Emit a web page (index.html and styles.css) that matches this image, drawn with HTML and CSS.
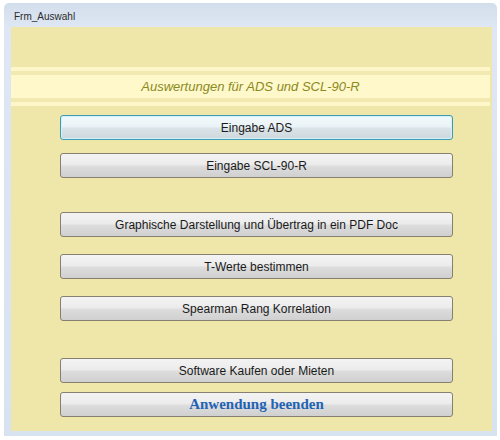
FILE: index.html
```html
<!DOCTYPE html>
<html lang="de">
<head>
<meta charset="UTF-8">
<meta name="viewport" content="width=device-width, initial-scale=1.0">
<title>Frm_Auswahl</title>
<link rel="stylesheet" href="styles.css">
</head>
<body>

<div class="window">
  <div class="titlebar">Frm_Auswahl</div>
  <div class="client">
    <div class="header">
      <div class="header-text">Auswertungen für ADS und SCL-90-R</div>
    </div>

    <div class="buttons">
      <button class="btn focused gap-xs">Eingabe ADS</button>
      <button class="btn gap-sm">Eingabe SCL-90-R</button>
      <button class="btn gap-lg">Graphische Darstellung und Übertrag in ein PDF Doc</button>
      <button class="btn gap-md">T-Werte bestimmen</button>
      <button class="btn gap-md">Spearman Rang Korrelation</button>
      <button class="btn gap-xl">Software Kaufen oder Mieten</button>
      <button class="btn quit gap-xs">Anwendung beenden</button>
    </div>
  </div>
</div>

</body>
</html>
```

FILE: styles.css
```css
body {
  margin: 0;
  background-color: #fff;
  font-family: "Liberation Sans", Arial, sans-serif;
}
.window {
  margin: 3px 0 0 4px;
  width: 493px;
  height: 433px;
  box-sizing: border-box;
  padding: 0 5px 5px 7px;
  background: linear-gradient(to bottom, #d3deec 0, #dee7f3 24px, #d8e3f1 100%);
  border-radius: 5px 5px 0 0;
  display: flex;
  flex-direction: column;
}
.titlebar {
  height: 24px;
  line-height: 27px;
  padding-left: 3px;
  font-size: 10px;
  color: #2b2b2b;
}
.client {
  flex: 1;
  background-color: #efe7aa; /* amarelo */
  padding-top: 40px;
}
.header {
  border-top: 4px solid #fdf6c9;
  border-bottom: 4px solid #fdf6c9;
  margin-right: 2px;
}
.header-text {
  border-top: 4px solid #f1e9b0;
  border-bottom: 4px solid #f1e9b0;
  background-color: #fff8cb;
  height: 23px;
  line-height: 24px;
  text-align: center;
  font-style: italic;
  font-size: 13px;
  color: #8a8a22;
}
.buttons {
  display: flex;
  flex-direction: column;
  padding-left: 49px;
}
.gap-xs { margin-top: 9px; }
.gap-sm { margin-top: 13px; }
.gap-md { margin-top: 17px; }
.gap-lg { margin-top: 34px; }
.gap-xl { margin-top: 37px; }
.btn {
  width: 393px;
  height: 25px;
  border: 1px solid #858070;
  border-radius: 3px;
  background: linear-gradient(to bottom, #f3f3f3 0%, #ececec 45%, #dcdcdc 55%, #d0d0d0 100%);
  font-family: "Liberation Sans", Arial, sans-serif;
  font-size: 12px;
  color: #1a1a1a;
  padding: 0;
  cursor: pointer;
}
.btn.focused {
  border-color: #3d9cb0;
  box-shadow: inset 0 0 0 1px #d4f1fb;
  background: linear-gradient(to bottom, #f2f9fc 0%, #eaf3f7 45%, #d9e2e6 55%, #cfd8dc 100%);
}
.btn.quit {
  font-family: "Liberation Serif", "Times New Roman", serif;
  font-weight: bold;
  font-size: 15px;
  color: #1f63b4;
}
```
